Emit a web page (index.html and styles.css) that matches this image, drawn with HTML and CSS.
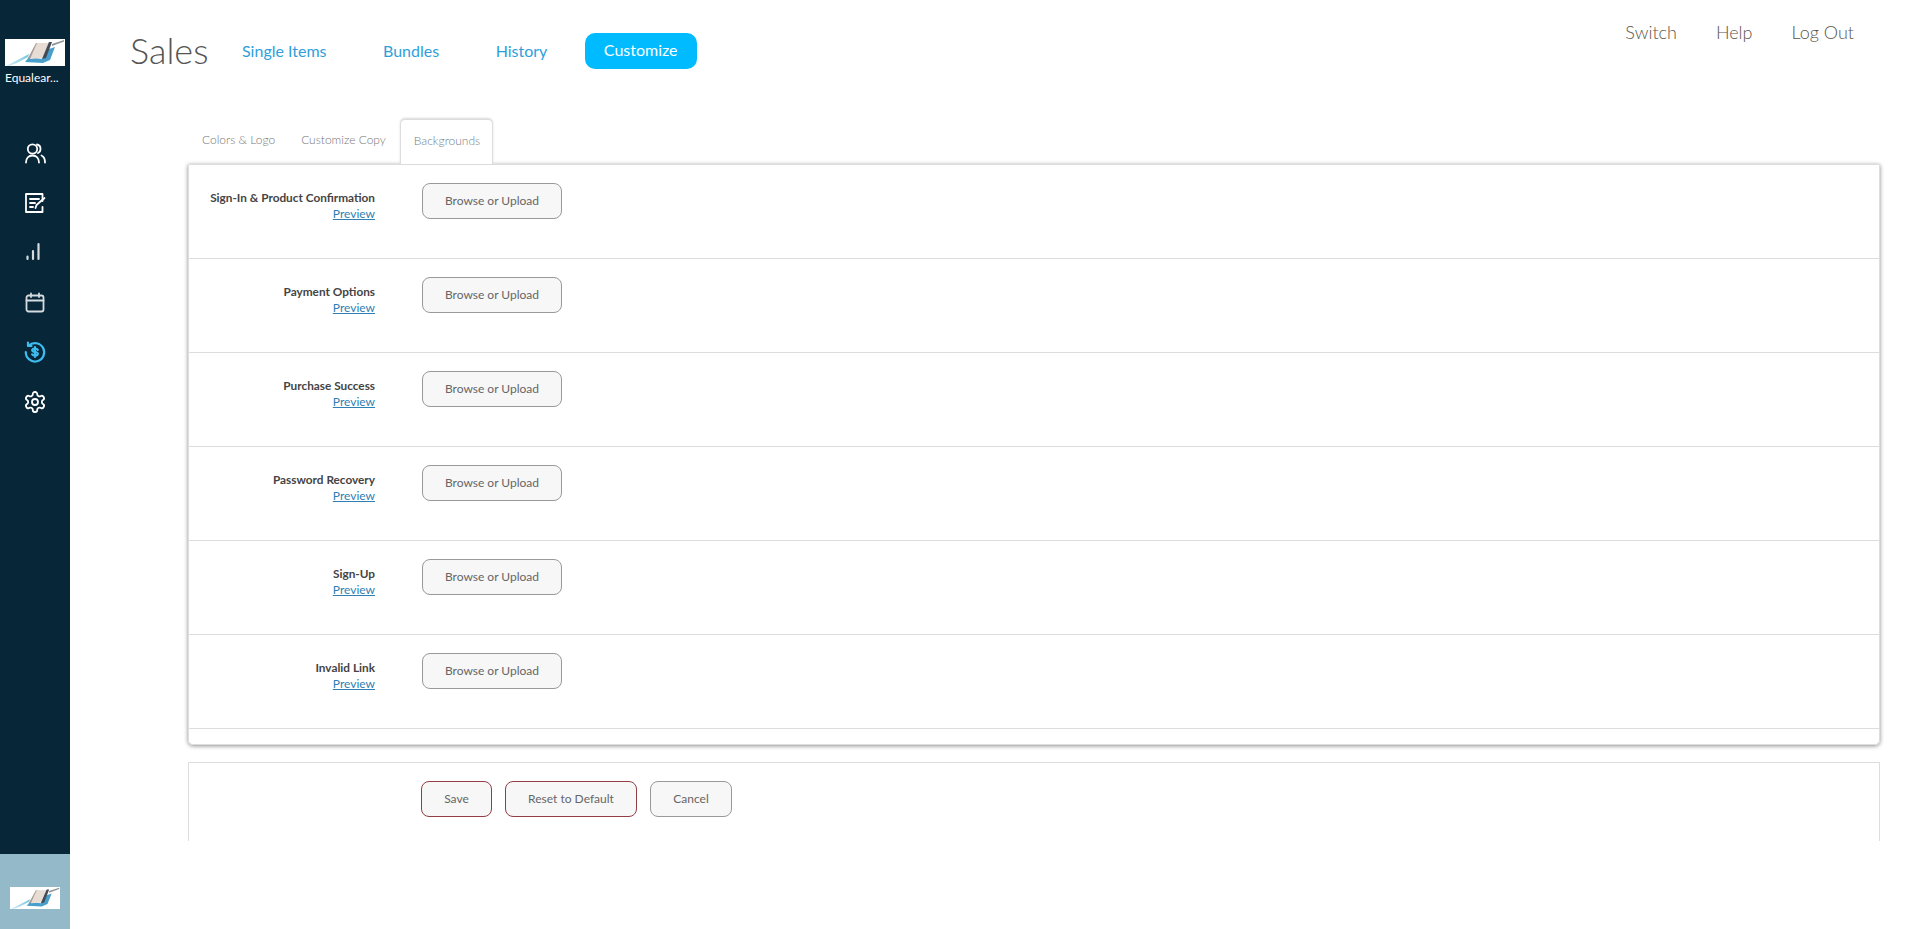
FILE: index.html
```html
<!DOCTYPE html>
<html lang="en">
<head>
  <meta charset="UTF-8">
  <title>Sales - Customize</title>
  <link rel="stylesheet" href="styles.css">
</head>
<body>

  <svg class="defs" width="0" height="0">
    <defs>
      <linearGradient id="streak" x1="0" y1="1" x2="1" y2="0">
        <stop offset="0" stop-color="#d5f0f4"/>
        <stop offset="1" stop-color="#6fc3dc"/>
      </linearGradient>
      <filter id="soft" x="-5%" y="-5%" width="110%" height="110%">
        <feGaussianBlur stdDeviation="0.5"/>
      </filter>
      <symbol id="logo" viewBox="0 0 60 27" preserveAspectRatio="none">
        <rect width="60" height="27" fill="#fff"/>
        <g filter="url(#soft)">
          <path d="M1 27 L24 15 L23 18 L12 24 L4 27 Z" fill="url(#streak)"/>
          <path d="M20 23 L24 18 L37 20 L44 10 L50 8 L45 21 L38 24 Z" fill="#4a9fcc"/>
          <path d="M23 19 L31 4 L34 4 L26 20 Z" fill="#a89c92"/>
          <path d="M25 20 L32 4 L45 4 L38 19 Z" fill="#e8ddd4"/>
          <path d="M37 20 L44 3 L47 3 L41 19 Z" fill="#454c56"/>
          <path d="M47 5 L59 1 L59 2.500 L47 7 Z" fill="#8e9196"/>
        </g>
      </symbol>
    </defs>
  </svg>

  <aside class="sidebar">
    <div class="account">
      <svg class="account-logo"><use href="#logo"/></svg>
      <div class="account-name">Equalear...</div>
    </div>

    <nav class="side-nav">
      <a class="side-link" href="#">
        <svg viewBox="0 0 24 24"><circle cx="9.500" cy="9" r="4.700"/><path d="M3 22.500c0-4.500 2.800-7 6.500-7s6.500 2.500 6.500 7"/><path d="M14 4.500a4.500 4.500 0 0 1 3.500 4.500c0 1.800-1 3.300-2.500 4"/><path d="M18.500 15.500c2.200 1 3.500 3.500 3.500 7"/></svg>
      </a>
      <a class="side-link" href="#">
        <svg viewBox="0 0 24 24"><path d="M19.500 11V4H3v18h16.500v-5"/><path d="M7 9h9M7 13h5M7 17h3"/><path d="M12.500 18l1-3 8-7"/></svg>
      </a>
      <a class="side-link dim" href="#">
        <svg viewBox="0 0 24 24"><path class="thick" d="M4.500 16.500v2.500M10 11v8M15.500 4v15"/></svg>
      </a>
      <a class="side-link dim" href="#">
        <svg viewBox="0 0 24 24"><rect x="3.500" y="5.500" width="17" height="16" rx="2"/><path d="M3.500 10.500h17M8 3.500V7M16 3.500V7"/></svg>
      </a>
      <a class="side-link active" href="#">
        <svg viewBox="0 0 24 24"><path class="thick" d="M5.600 5.700A9.200 9.200 0 1 1 2.800 12"/><path class="thick" d="M5 2.500V6h3.500"/><path class="thick" d="M14.800 9.800c-.5-.8-1.500-1.300-2.800-1.300-1.600 0-2.800.7-2.800 1.800s1.200 1.500 2.800 1.700 2.800.7 2.800 1.800-1.200 1.800-2.800 1.800c-1.300 0-2.300-.5-2.800-1.300M12 7v10"/></svg>
      </a>
      <a class="side-link" href="#">
        <svg viewBox="0 0 24 24"><path d="M12.220 2h-.44a2 2 0 0 0-2 2v.18a2 2 0 0 1-1 1.730l-.43.250a2 2 0 0 1-2 0l-.15-.08a2 2 0 0 0-2.730.730l-.22.380a2 2 0 0 0 .730 2.730l.15.100a2 2 0 0 1 1 1.720v.510a2 2 0 0 1-1 1.740l-.15.090a2 2 0 0 0-.730 2.730l.22.380a2 2 0 0 0 2.730.730l.15-.08a2 2 0 0 1 2 0l.43.250a2 2 0 0 1 1 1.730V20a2 2 0 0 0 2 2h.44a2 2 0 0 0 2-2v-.18a2 2 0 0 1 1-1.730l.43-.25a2 2 0 0 1 2 0l.15.080a2 2 0 0 0 2.730-.730l.22-.39a2 2 0 0 0-.730-2.730l-.15-.08a2 2 0 0 1-1-1.740v-.5a2 2 0 0 1 1-1.740l.15-.09a2 2 0 0 0 .730-2.730l-.22-.38a2 2 0 0 0-2.730-.730l-.15.080a2 2 0 0 1-2 0l-.43-.25a2 2 0 0 1-1-1.730V4a2 2 0 0 0-2-2z"/><circle cx="12" cy="12" r="3"/></svg>
      </a>
    </nav>

    <div class="side-bottom">
      <svg class="bottom-logo"><use href="#logo"/></svg>
    </div>
  </aside>

  <div class="main">
    <header class="topbar">
      <h1 class="page-title">Sales</h1>
      <nav class="top-nav">
        <a href="#">Single Items</a>
        <a href="#">Bundles</a>
        <a href="#">History</a>
        <a class="current" href="#">Customize</a>
      </nav>
      <nav class="user-nav">
        <a href="#">Switch</a>
        <a href="#">Help</a>
        <a href="#">Log Out</a>
      </nav>
    </header>

    <div class="content">
      <div class="tabs">
        <a class="tab" href="#">Colors &amp; Logo</a>
        <a class="tab" href="#">Customize Copy</a>
        <a class="tab selected" href="#">Backgrounds</a>
      </div>

      <div class="panel">
        <div class="row">
          <div class="row-label"><strong>Sign-In &amp; Product Confirmation</strong><a href="#">Preview</a></div>
          <button class="btn">Browse or Upload</button>
        </div>
        <div class="row">
          <div class="row-label"><strong>Payment Options</strong><a href="#">Preview</a></div>
          <button class="btn">Browse or Upload</button>
        </div>
        <div class="row">
          <div class="row-label"><strong>Purchase Success</strong><a href="#">Preview</a></div>
          <button class="btn">Browse or Upload</button>
        </div>
        <div class="row">
          <div class="row-label"><strong>Password Recovery</strong><a href="#">Preview</a></div>
          <button class="btn">Browse or Upload</button>
        </div>
        <div class="row">
          <div class="row-label"><strong>Sign-Up</strong><a href="#">Preview</a></div>
          <button class="btn">Browse or Upload</button>
        </div>
        <div class="row">
          <div class="row-label"><strong>Invalid Link</strong><a href="#">Preview</a></div>
          <button class="btn">Browse or Upload</button>
        </div>
      </div>

      <div class="actions">
        <button class="btn danger save">Save</button>
        <button class="btn danger reset">Reset to Default</button>
        <button class="btn cancel">Cancel</button>
      </div>
    </div>
  </div>

</body>
</html>
```

FILE: styles.css
```css
* {
  margin: 0;
  padding: 0;
  box-sizing: border-box;
  font-family: Lato, "Open Sans", sans-serif;
}

body {
  display: flex;
  height: 100vh;
  overflow: hidden;
  background-color: #fff;
  color: #555;
}

a {
  text-decoration: none;
}

.defs {
  position: absolute;
}

.sidebar {
  display: flex;
  flex-direction: column;
  flex: none;
  width: 70px;
  background-color: #072638;
}

.account {
  padding: 39px 5px 0;
}

.account-logo {
  display: block;
  width: 60px;
  height: 27px;
}

.account-name {
  margin-top: 5px;
  font-size: 12px;
  line-height: 14px;
  color: #fff;
  white-space: nowrap;
}

.side-nav {
  display: flex;
  flex-direction: column;
  align-items: center;
  gap: 26px;
  margin-top: 55px;
}

.side-link {
  display: block;
  width: 24px;
  height: 24px;
}

.side-link svg {
  display: block;
  width: 100%;
  height: 100%;
  fill: none;
  stroke: #fff;
  stroke-width: 1.800;
  stroke-linecap: round;
  stroke-linejoin: round;
}

.side-link .thick {
  stroke-width: 2.200;
}

.side-link.dim svg {
  stroke: #d5dbdf;
}

.side-link.active svg {
  stroke: #3dbcf0;
}

.side-bottom {
  display: flex;
  align-items: center;
  justify-content: center;
  height: 75px;
  margin-top: auto;
  padding-top: 12px;
  background-color: #94bac9;
}

.bottom-logo {
  width: 50px;
  height: 22px;
}

.main {
  flex: 1;
  min-width: 0;
}

.topbar {
  display: flex;
  align-items: flex-start;
  height: 119px;
  padding: 33px 66px 0 60px;
}

.page-title {
  width: 112px;
  font-size: 36px;
  font-weight: 300;
  line-height: 34px;
  color: #555;
}

.top-nav {
  display: flex;
  align-items: center;
  gap: 56.500px;
  height: 36px;
  padding-bottom: 2px;
}

.top-nav a {
  font-size: 16px;
  color: #2f9fdc;
}

.top-nav a.current {
  margin-bottom: -2px;
  margin-left: -19px;
  padding: 0 19px 2px;
  line-height: 34px;
  color: #fff;
  background-color: #00bbff;
  border-radius: 10px;
}

.user-nav {
  display: flex;
  gap: 39px;
  margin-top: -1px;
  margin-left: auto;
}

.user-nav a {
  font-size: 18px;
  font-weight: 300;
  line-height: 0;
  color: #5c5648;
}

.content {
  width: 1692px;
  margin-left: 118px;
}

.tabs {
  display: flex;
  height: 45px;
  padding-left: 1px;
}

.tab {
  padding: 0 13px;
  font-size: 12px;
  font-weight: 300;
  line-height: 42px;
  color: #777;
}

.tab.selected {
  position: relative;
  z-index: 1;
  height: 45px;
  margin-left: 1px;
  padding-right: 12px;
  color: #6f7f8c;
  background-color: #fff;
  border: 1px solid #ddd;
  border-bottom: none;
  border-radius: 5px 5px 0 0;
  box-shadow: 0 -1px 2px rgba(0, 0, 0, 0.15);
}

.panel {
  height: 581px;
  border: 1px solid #ddd;
  border-radius: 0 0 5px 5px;
  box-shadow: 0 1px 4px rgba(0, 0, 0, 0.45);
}

.row {
  display: flex;
  align-items: flex-start;
  height: 94px;
  padding-top: 18px;
  border-bottom: 1px solid #ddd;
}

.row-label {
  display: flex;
  flex-direction: column;
  align-items: flex-end;
  width: 186px;
  margin-right: 47px;
  padding-top: 7px;
  font-size: 12px;
  line-height: 16px;
}

.row-label strong {
  font-size: 11.800px;
  font-weight: 700;
  color: #444;
}

.row-label a {
  color: #2f7fb5;
  text-decoration: underline;
}

.btn {
  height: 36px;
  padding-bottom: 2px;
  font-size: 12px;
  color: #666;
  background-color: #f7f7f7;
  border: 1px solid #999;
  border-radius: 8px;
}

.row .btn {
  width: 140px;
}

.actions {
  display: flex;
  gap: 13px;
  height: 79px;
  margin-top: 17px;
  padding: 18px 0 0 232px;
  border: 1px solid #ddd;
  border-bottom: none;
}

.btn.danger {
  border-color: #923e44;
}

.save {
  width: 71px;
}

.reset {
  width: 132px;
}

.cancel {
  width: 82px;
}
```
